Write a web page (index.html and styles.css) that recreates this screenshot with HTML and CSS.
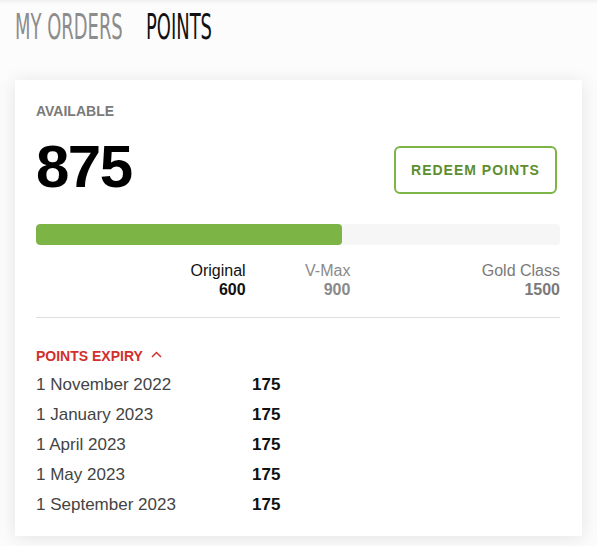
FILE: index.html
```html
<!DOCTYPE html>
<html lang="en">
<head>
<meta charset="utf-8">
<title>Points</title>
<link rel="stylesheet" href="styles.css">
</head>
<body>
  <header class="tabs">
    <div class="tabs-inner">
      <span class="tab tab-muted">MY ORDERS</span>
      <span class="tab tab-active">POINTS</span>
    </div>
  </header>

  <main class="card">
    <div class="label">AVAILABLE</div>
    <div class="balance-row">
      <div class="balance">875</div>
      <button class="redeem" type="button">REDEEM POINTS</button>
    </div>

    <div class="track">
      <div class="fill" style="width: 58.333%"></div>
    </div>

    <div class="tiers">
      <div class="tier tier-current" style="width: 40%">
        <div class="tier-name">Original</div>
        <div class="tier-points">600</div>
      </div>
      <div class="tier" style="width: 20%">
        <div class="tier-name">V-Max</div>
        <div class="tier-points">900</div>
      </div>
      <div class="tier tier-far" style="width: 40%">
        <div class="tier-name">Gold Class</div>
        <div class="tier-points">1500</div>
      </div>
    </div>

    <hr class="divider">

    <div class="expiry-title">POINTS EXPIRY
      <svg class="chev" width="11" height="7" viewBox="0 0 11 7"><polyline points="1,6 5.5,1.5 10,6" fill="none" stroke="#d1302c" stroke-width="1.5"/></svg>
    </div>
    <div class="expiry-list">
      <div class="date">1 November 2022</div><div class="amt">175</div>
      <div class="date">1 January 2023</div><div class="amt">175</div>
      <div class="date">1 April 2023</div><div class="amt">175</div>
      <div class="date">1 May 2023</div><div class="amt">175</div>
      <div class="date">1 September 2023</div><div class="amt">175</div>
    </div>
  </main>
</body>
</html>
```

FILE: styles.css
```css
html, body {
  margin: 0;
  padding: 0;
}
body {
  background: #fcfcfc;
  font-family: "Liberation Sans", Arial, sans-serif;
  width: 597px;
  height: 546px;
  overflow: hidden;
  box-shadow: inset 0 4px 4px -3px rgba(0,0,0,0.08);
}
.tabs {
  padding: 7px 0 0 15px;
  height: 80px;
  box-sizing: border-box;
}
.tabs-inner {
  display: flex;
  gap: 42px;
  font-family: "DejaVu Sans", sans-serif;
  font-stretch: condensed;
  font-size: 36px;
  line-height: 40px;
  transform: scaleX(0.554);
  transform-origin: left top;
  white-space: nowrap;
}
.tab-muted { color: #8c8c8c; }
.tab-active { color: #111; }

.card {
  margin: 0 15px;
  background: #fff;
  padding: 23px 22px 16px 21px;
  box-shadow: 0 2px 18px rgba(0,0,0,0.1);
}
.label {
  font-size: 14px;
  line-height: 16px;
  font-weight: bold;
  color: #7a7a7a;
}
.balance-row {
  display: flex;
  justify-content: space-between;
  align-items: flex-start;
  margin-top: 18px;
}
.balance {
  font-size: 60px;
  line-height: 60px;
  font-weight: bold;
  color: #000;
  letter-spacing: -1.5px;
}
.redeem {
  margin-top: 9px;
  margin-right: 3px;
  height: 48px;
  width: 163px;
  box-sizing: border-box;
  border: 2px solid #7db446;
  border-radius: 6px;
  background: #fff;
  color: #5d8f2f;
  font-family: "Liberation Sans", Arial, sans-serif;
  font-size: 14px;
  font-weight: bold;
  letter-spacing: 1px;
  padding: 0;
}
.track {
  margin-top: 27px;
  height: 21px;
  background: #f6f6f6;
  border-radius: 4px;
  overflow: hidden;
}
.fill {
  height: 100%;
  background: #7db446;
  border-radius: 4px;
}
.tiers {
  display: flex;
  margin-top: 16px;
}
.tier {
  text-align: right;
  color: #8a8a8a;
  line-height: 19px;
}
.tier-name { font-size: 16px; }
.tier-points { font-size: 16px; font-weight: bold; }
.tier-current { color: #111; }
.tier-far { color: #7a7a7a; }
.divider {
  margin: 18px 0 0 0;
  border: 0;
  border-top: 1px solid #dedede;
  height: 0;
}
.expiry-title {
  margin-top: 30px;
  font-size: 14px;
  line-height: 16px;
  font-weight: bold;
  color: #d1302c;
  display: flex;
  align-items: center;
  gap: 8px;
}
.chev { margin-top: -4px; }
.expiry-list {
  margin-top: 6px;
  display: grid;
  grid-template-columns: 216px auto;
  font-size: 17px;
  line-height: 30px;
}
.date { color: #444; }
.amt { font-weight: bold; color: #111; }
```
